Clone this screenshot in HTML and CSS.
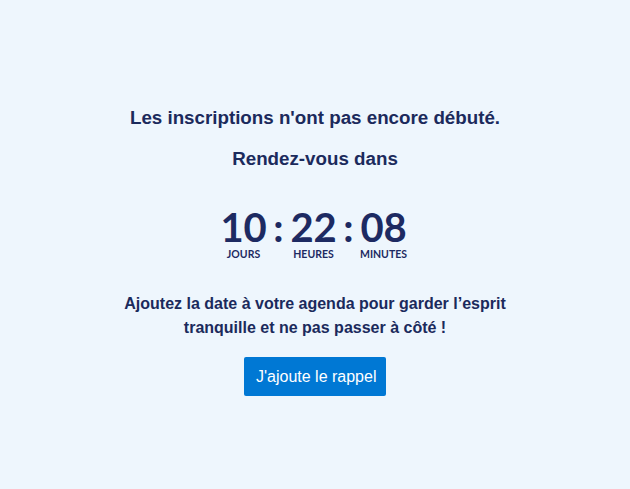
FILE: index.html
```html
<!DOCTYPE html>
<html lang="fr">
<head>
<meta charset="utf-8">
<link rel="stylesheet" href="styles.css">
</head>
<body>
<main class="page">
  <section class="card">
    <h1 class="title">Les inscriptions n'ont pas encore débuté.</h1>
    <h2 class="subtitle">Rendez-vous dans</h2>
    <div class="countdown">
      <div class="unit"><span class="num">10</span><span class="label">JOURS</span></div>
      <span class="sep">:</span>
      <div class="unit"><span class="num">22</span><span class="label">HEURES</span></div>
      <span class="sep">:</span>
      <div class="unit"><span class="num">08</span><span class="label">MINUTES</span></div>
    </div>
    <p class="note">Ajoutez la date à votre agenda pour garder l’esprit tranquille et ne pas passer à côté !</p>
    <button class="btn">J'ajoute le rappel</button>
  </section>
</main>
</body>
</html>
```
FILE: styles.css
```css
html, body {
  margin: 0;
  padding: 0;
  background: #eef6fd;
}
.page {
  width: 630px;
  height: 489px;
  display: flex;
  justify-content: center;
  font-family: "Liberation Sans", Arial, sans-serif;
  color: #1b2a5c;
}
.card {
  display: flex;
  flex-direction: column;
  align-items: center;
  padding-top: 106px;
  width: 440px;
  text-align: center;
}
.title {
  margin: 0;
  font-size: 18.75px;
  font-weight: 700;
  line-height: 24px;
}
.subtitle {
  margin: 17px 0 0;
  font-size: 18.75px;
  font-weight: 700;
  line-height: 24px;
}
.countdown {
  display: flex;
  align-items: flex-start;
  margin-top: 36px;
  margin-right: 3px;
  font-family: Lato, sans-serif;
  color: #1d2a62;
}
.unit {
  display: flex;
  flex-direction: column;
  align-items: center;
  width: 46px;
}
.num {
  font-size: 40px;
  font-weight: 700;
  line-height: 40px;
  letter-spacing: -0.3px;
}
.label {
  font-size: 10.5px;
  font-weight: 700;
  line-height: 12px;
  margin-top: 1px;
}
.sep {
  font-size: 40px;
  font-weight: 700;
  line-height: 40px;
  width: 24px;
}
.note {
  margin: 32px 0 0;
  font-size: 16px;
  font-weight: 700;
  line-height: 24px;
  width: 400px;
}
.btn {
  margin-top: 17px;
  background: #0078d4;
  color: #ffffff;
  border: none;
  border-radius: 2px;
  font-family: "Liberation Sans", Arial, sans-serif;
  font-size: 16px;
  height: 39px;
  padding: 0 12px;
  width: 142px;
  white-space: nowrap;
}
```
